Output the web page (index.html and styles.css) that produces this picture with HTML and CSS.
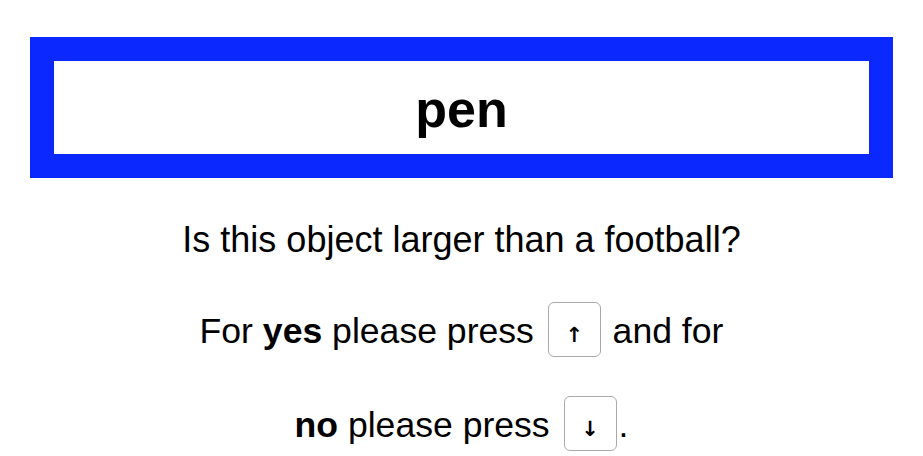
FILE: index.html
```html
<!DOCTYPE html>
<html>
<head>
<meta charset="utf-8">
<link rel="stylesheet" href="styles.css">
</head>
<body>
<div class="page">
  <div class="stimulus-frame">
    <div class="stimulus">pen</div>
  </div>
  <p class="question">Is this object larger than a football?</p>
  <p class="instructions">For <b>yes</b> please press <span class="key">↑</span> and for<br><b>no</b> please press <span class="key">↓</span>.</p>
</div>
</body>
</html>
```
FILE: styles.css
```css
html, body {
  margin: 0;
  padding: 0;
  background: #ffffff;
}
.page {
  font-family: "Liberation Sans", Arial, Helvetica, sans-serif;
  color: #000000;
  padding-top: 37px;
  display: flex;
  flex-direction: column;
  align-items: center;
}
.stimulus-frame {
  box-sizing: border-box;
  width: 863px;
  height: 141px;
  border: 24px solid #0b29ff;
  background: #ffffff;
  display: flex;
  align-items: center;
  justify-content: center;
}
.stimulus {
  font-size: 52px;
  font-weight: bold;
  line-height: 1;
  padding-top: 2px;
}
.question {
  margin: 0;
  margin-top: 42px;
  font-size: 36px;
  line-height: 40px;
  text-align: center;
}
.instructions {
  margin: 0;
  margin-top: 24px;
  font-size: 35.6px;
  line-height: 94px;
  text-align: center;
}
.key {
  display: inline-block;
  box-sizing: border-box;
  width: 53px;
  height: 55px;
  margin: 0 2px 0 4px;
  padding-top: 20px;
  overflow: hidden;
  border: 1.5px solid #aaaaaa;
  border-radius: 6px;
  color: #000000;
  font-family: "DejaVu Sans", sans-serif;
  font-size: 21px;
  font-weight: bold;
  line-height: 24px;
  text-align: center;
  vertical-align: -14px;
}
```
